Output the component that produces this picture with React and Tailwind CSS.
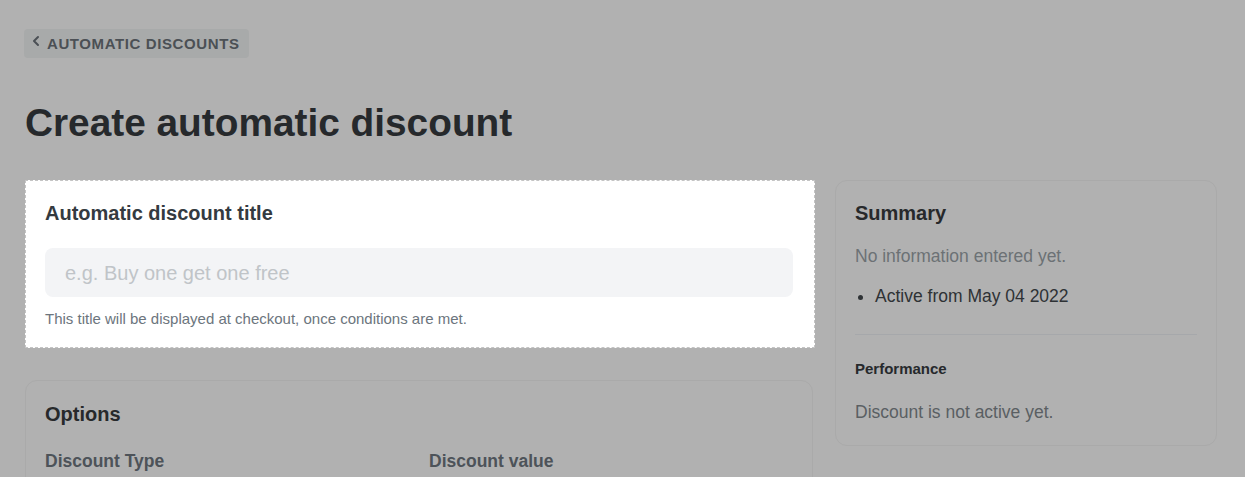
// App.jsx — create automatic discount (tour step highlight)
const font = { fontFamily: '"Liberation Sans", Arial, sans-serif' }

function ChevronLeft() {
  return (
    <svg width="10" height="12" viewBox="0 0 10 12" fill="none" className="mb-[5px]">
      <path d="M7 2 L3 6 L7 10" stroke="#4b5055" strokeWidth="2" strokeLinecap="round" strokeLinejoin="round" />
    </svg>
  )
}

export default function App() {
  return (
    <div className="min-h-screen bg-[#b1b1b1] px-[25px] pt-[29px]" style={font}>
      <div className="-ml-px inline-flex h-[29px] items-center gap-[6px] rounded bg-[#a8aaaa] pl-[7px] pr-[9px]">
        <ChevronLeft />
        <span className="text-[15px] font-bold uppercase leading-none tracking-[0.04em] text-[#4b5055]">
          Automatic discounts
        </span>
      </div>

      <h1 className="mt-[41px] text-[38.8px] font-bold leading-[48px] text-[#26292c]">
        Create automatic discount
      </h1>

      <div className="mt-[33px] flex items-start gap-5">
        <div className="flex w-[790px] flex-col gap-[32px]">
          <div className="border border-dashed border-[#c4c4c4] bg-white">
            <div className="rounded-xl bg-white pb-[18px] pl-[19px] pr-[21px] pt-[18px]">
              <h2 className="text-[20px] font-bold leading-7 text-[#343a40]">Automatic discount title</h2>
              <div className="mt-[21px] flex h-[49px] items-center rounded-lg bg-[#f3f4f6] px-5 text-[20px] text-[#c0c4c8]">
                e.g. Buy one get one free
              </div>
              <p className="mt-3 text-[15px] leading-5 text-[#6c757d]">
                This title will be displayed at checkout, once conditions are met.
              </p>
            </div>
          </div>

          <div className="mr-[2px] rounded-xl border border-[#aaaaaa] px-[19px] pb-10 pt-[19px]">
            <h2 className="text-[20px] font-bold leading-7 text-[#27292b]">Options</h2>
            <div className="mt-[21px] grid grid-cols-2 gap-5">
              <div className="text-[17.5px] font-bold leading-6 text-[#4d5359]">Discount Type</div>
              <div className="text-[17.5px] font-bold leading-6 text-[#4d5359]">Discount value</div>
            </div>
          </div>
        </div>

        <div className="w-[382px] rounded-xl border border-[#aaaaaa] px-[19px] pb-[21px] pt-[18px]">
          <h2 className="text-[20px] font-bold leading-7 text-[#27292b]">Summary</h2>
          <p className="mt-[17px] text-[17.5px] leading-6 text-[#6c7175]">No information entered yet.</p>
          <ul className="mt-4 list-disc pl-5 text-[17.5px] leading-6 text-[#2e3235]">
            <li>Active from May 04 2022</li>
          </ul>
          <div className="mt-[26px] border-t border-[#a6a8ab]" />
          <h3 className="mt-6 text-[15px] font-bold leading-5 text-[#26292c]">Performance</h3>
          <p className="mt-[21px] text-[17.5px] leading-6 text-[#5a5f63]">Discount is not active yet.</p>
        </div>
      </div>
    </div>
  )
}
